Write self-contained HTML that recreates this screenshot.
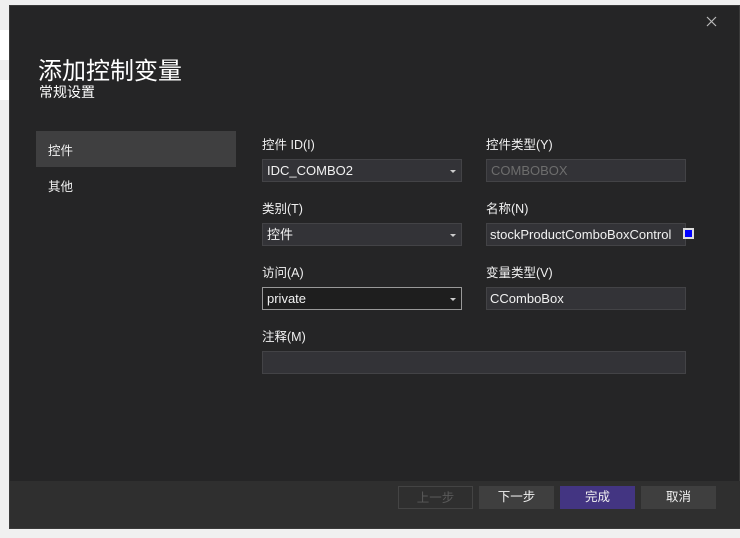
<html><head><style>
body{margin:0;width:740px;height:538px;background:#f0f0f0;position:relative;overflow:hidden;font-family:"Liberation Sans","Noto Sans CJK SC",sans-serif;color:#f1f1f1}
.a{position:absolute}
.dlg{left:9px;top:5px;width:731px;height:524px;background:#252526;border:1px solid #3a3a3a;box-sizing:border-box}
.foot{left:10px;top:481px;width:730px;height:47px;background:#2f2f2f}
.lbl{font-size:12.5px;color:#f1f1f1}
.box{background:#333337;border:1px solid #434346;box-sizing:border-box;font-size:13px;line-height:21px;padding-left:4px;color:#f1f1f1}
.arr{position:absolute;right:5px;top:10px;width:0;height:0;border-left:3px solid transparent;border-right:3px solid transparent;border-top:3px solid #ccc}
.btn{height:23px;top:486px;width:75px;text-align:center;font-size:12.5px;line-height:23px;box-sizing:border-box}
</style></head><body>
<div class="a" style="left:0;top:30px;width:9px;height:30px;background:#fff"></div>
<div class="a" style="left:0;top:80px;width:9px;height:20px;background:#fff"></div>
<div class="a dlg"></div>
<div class="a foot"></div>
<svg class="a" style="left:706px;top:16px" width="11" height="11"><path d="M1 1L10 10M10 1L1 10" stroke="#bbb" stroke-width="1.2"/></svg>
<div class="a" style="left:38px;top:51px;font-size:24px;color:#fff">添加控制变量</div>
<div class="a" style="left:39px;top:82px;font-size:14px;color:#fff">常规设置</div>
<div class="a" style="left:36px;top:131px;width:200px;height:36px;background:#3f3f40"></div>
<div class="a" style="left:48px;top:140px;font-size:12.5px">控件</div>
<div class="a" style="left:48px;top:176px;font-size:12.5px">其他</div>

<div class="a lbl" style="left:262px;top:134px">控件 ID(I)</div>
<div class="a box" style="left:262px;top:159px;width:200px;height:23px">IDC_COMBO2<div class="arr"></div></div>
<div class="a lbl" style="left:486px;top:134px">控件类型(Y)</div>
<div class="a box" style="left:486px;top:159px;width:200px;height:23px;color:#6d6d6d">COMBOBOX</div>

<div class="a lbl" style="left:262px;top:198px">类别(T)</div>
<div class="a box" style="left:262px;top:223px;width:200px;height:23px">控件<div class="arr"></div></div>
<div class="a lbl" style="left:486px;top:198px">名称(N)</div>
<div class="a box" style="left:486px;top:223px;width:200px;height:23px;overflow:hidden;white-space:nowrap;padding-left:3px">stockProductComboBoxControl</div>
<div class="a" style="left:683px;top:228px;width:11px;height:11px;background:#ddd;box-sizing:border-box;border:2px solid #ddd"><div style="width:7px;height:7px;background:#00f"></div></div>

<div class="a lbl" style="left:262px;top:262px">访问(A)</div>
<div class="a box" style="left:262px;top:287px;width:200px;height:23px;background:#1e1e1e;border-color:#999">private<div class="arr"></div></div>
<div class="a lbl" style="left:486px;top:262px">变量类型(V)</div>
<div class="a box" style="left:486px;top:287px;width:200px;height:23px;padding-left:3px">CComboBox</div>

<div class="a lbl" style="left:262px;top:326px">注释(M)</div>
<div class="a box" style="left:262px;top:351px;width:424px;height:23px"></div>

<div class="a btn" style="left:398px;border:1px solid #444;color:#5a5a5a">上一步</div>
<div class="a btn" style="left:479px;background:#3f3f3f">下一步</div>
<div class="a btn" style="left:560px;background:#433582">完成</div>
<div class="a btn" style="left:641px;background:#3f3f3f">取消</div>
</body></html>
